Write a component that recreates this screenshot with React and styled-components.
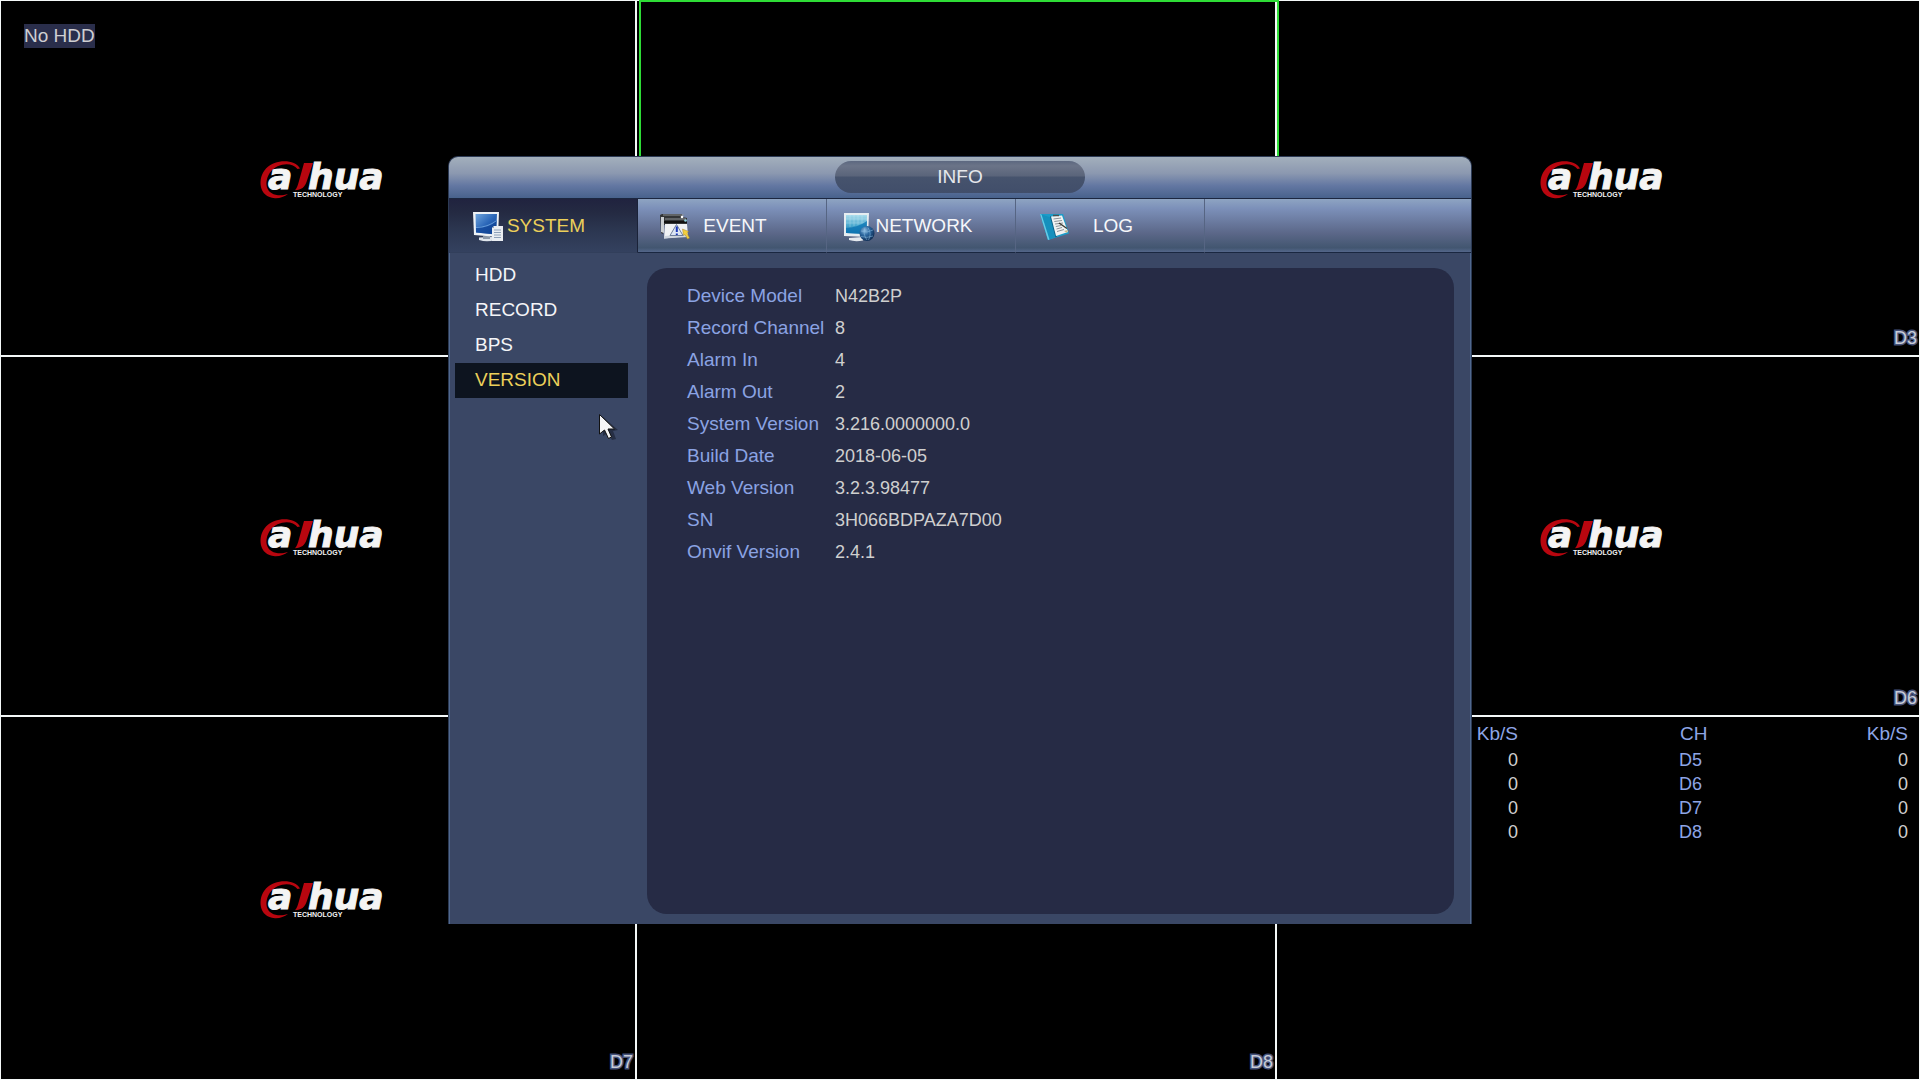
import React from "react";
import styled, { createGlobalStyle } from "styled-components";

const tabs = [
    { name: "SYSTEM", Icon: SystemIcon, active: true },
    { name: "EVENT", Icon: EventIcon },
    { name: "NETWORK", Icon: NetworkIcon },
    { name: "LOG", Icon: LogIcon }
];

const menu = ["HDD", "RECORD", "BPS", "VERSION"];

const details = [
    ["Device Model", "N42B2P"],
    ["Record Channel", "8"],
    ["Alarm In", "4"],
    ["Alarm Out", "2"],
    ["System Version", "3.216.0000000.0"],
    ["Build Date", "2018-06-05"],
    ["Web Version", "3.2.3.98477"],
    ["SN", "3H066BDPAZA7D00"],
    ["Onvif Version", "2.4.1"]
];

const rates = ["D5", "D6", "D7", "D8"];

function Logo () {
    return (
        <svg width="132" height="60" viewBox="-2 -10 132 60" role="img" aria-label="alhua technology">
            <path
                d="M46 9.5C41 .5 22-.5 12 9.5C3 19 4.500 38.500 21 39.200C26 39.400 30.500 37.500 34 35C30 36.200 27 36.600 24 36.200C11 34.800 10 22.500 16 13.500C23 4 38 2.500 43.500 10Z"
                fill="#b8060f"
            />
            <path d="M50 4H59L52.500 23C50.800 28 47.500 31 41 31.200C43 29 43.800 26.500 45 22Z" fill="#b8060f" />
            <LogoText x="14" y="30">{"a"}</LogoText>
            <LogoText x="54" y="30">{"hua"}</LogoText>
            <LogoCaption x="39" y="38">{"TECHNOLOGY"}</LogoCaption>
        </svg>
    );
}

function SystemIcon () {
    return (
        <svg width="32" height="32" viewBox="0 0 32 32">
            <defs>
                <linearGradient id="sysScreen" x1="0" y1="0" x2="1" y2="1">
                    <stop offset="0" stopColor="#6fa4dc" />
                    <stop offset="0.5" stopColor="#2a66b8" />
                    <stop offset="1" stopColor="#0d3c8c" />
                </linearGradient>
            </defs>
            <path d="M8 27.500L22 27L24 30Q16 32.500 8 30Z" fill="#dfe5ec" />
            <path d="M12 26H19V29H12Z" fill="#8c98a8" />
            <path d="M2 2H28L27 27L3 25Z" fill="#eef2f6" />
            <path d="M4.500 4H26L25 24.500L5 22.500Z" fill="url(#sysScreen)" />
            <path d="M5 17Q16 17 25.700 10L25 24.500L5 22.500Z" fill="#0f4497" opacity="0.7" />
            <path d="M5 17Q16 17 25.700 10V11Q16 18.500 5 18Z" fill="#5f97d8" />
            <path d="M23 16H32V31H21V18Z" fill="#e9edf2" />
            <path d="M23 20H30M23 22.500H30M23 25H30M23 27.500H30" stroke="#8da0b8" strokeWidth="1" />
            <path d="M23 16V18H21Z" fill="#9aa9bc" />
        </svg>
    );
}

function EventIcon () {
    return (
        <svg width="32" height="32" viewBox="0 0 32 32">
            <path d="M0 5L2 4H22V7L27 8V15H3V24L1 23Z" fill="#333537" />
            <path d="M1 7H4V23L1 22Z" fill="#c9cdd1" />
            <path d="M3 5H24M5 9H26" stroke="#8f9396" strokeWidth="1" />
            <path d="M4 12H27" stroke="#111" strokeWidth="2" />
            <circle cx="22" cy="7" r="1.3" fill="#fff" />
            <circle cx="25.500" cy="10.500" r="1.300" fill="#8fd0e0" />
            <path d="M5 14H27L28 26L4 28.500Z" fill="#f0f2f5" />
            <path d="M4 26L28 24V27L4 28.500Z" fill="#cfd6df" />
            <path d="M16.500 14.500L23 25.500H10Z" fill="#dce5f4" stroke="#6f7f9c" strokeWidth="1" />
            <path d="M16.800 16.500V22M16.800 23.500V25" stroke="#1936b8" strokeWidth="2" />
            <path d="M22.500 19L28.500 21.500L27 23L29.500 28L27.500 29L25 24.500L23.500 25.500Z" fill="#f3cf3e" stroke="#a3822a" strokeWidth="0.500" />
        </svg>
    );
}

function NetworkIcon () {
    return (
        <svg width="32" height="32" viewBox="0 0 32 32">
            <defs>
                <linearGradient id="netScreen" x1="0" y1="0" x2="0" y2="1">
                    <stop offset="0" stopColor="#a9dcec" />
                    <stop offset="0.550" stopColor="#4aa9cf" />
                    <stop offset="1" stopColor="#1272a8" />
                </linearGradient>
                <radialGradient id="netGlobe" cx="0.350" cy="0.300" r="0.800">
                    <stop offset="0" stopColor="#8fbde0" />
                    <stop offset="0.400" stopColor="#2c68a0" />
                    <stop offset="1" stopColor="#0a2348" />
                </radialGradient>
            </defs>
            <path d="M6 28L20 27V30.500Q12 32 6 30Z" fill="#e4e9ee" />
            <path d="M1 3H26L25 27L1 26Z" fill="#e6edf1" />
            <path d="M3 5H24L23.500 24L3 23Z" fill="url(#netScreen)" />
            <path d="M7 5V17M11 5V16M15 5V15M19 5V13M3 9H24M3 13H24" stroke="#d3f0f6" strokeWidth="0.600" opacity="0.500" />
            <path d="M3 18Q14 18 24 11L23.500 24L3 23Z" fill="#0c76b4" opacity="0.800" />
            <circle cx="24" cy="23.500" r="7.500" fill="url(#netGlobe)" />
            <path d="M18 21Q24 23.500 30 20M18 26.500Q24 28.500 30 26M22 17.500Q19.500 24 24 30M25 17.500Q29 24 25.500 30" stroke="#8fc0e4" strokeWidth="0.500" fill="none" />
        </svg>
    );
}

function LogIcon () {
    return (
        <svg width="32" height="32" viewBox="0 0 32 32">
            <path d="M2 4L25 4L31 23.500L10 30Z" fill="#1b9cc9" />
            <path d="M2 4L13 7.500L18 27L10 30Z" fill="#1590bd" />
            <path d="M2 4L3.500 4.500L11.500 29.500L10 30Z" fill="#69cbe6" />
            <path d="M12 6.500L13.500 6L19 26.500L17.500 27.500Z" fill="#0a5f86" />
            <path d="M13 6.500L24 5.500L30 22L18 26Z" fill="#f0f2f2" />
            <path d="M15.500 9L23 8M16.300 11.500L24 10.500M17 14L25 13M17.800 16.500L23 15.500M18.500 19L24 17.500M19 21.500L26 19.500" stroke="#8b9298" strokeWidth="1" />
            <path d="M15 5.500H21" stroke="#4b4f50" strokeWidth="1.500" />
            <path d="M21 13L29 18.500" stroke="#3b3b33" strokeWidth="1.500" />
            <path d="M26 21L30 20L29 23Z" fill="#c8b98a" />
        </svg>
    );
}

function Pointer () {
    return (
        <PointerSvg width="22" height="28" viewBox="0 0 22 28" aria-hidden="true">
            <path d="M4 3L19 16L14 17L17 25L13 26L9 19L4 22Z" fill="#1c2436" opacity="0.700" />
            <path d="M0.500 0.500V20L5.500 16L9.500 24.500L12.500 23L9 15H15.500Z" fill="#f4f4f6" stroke="#111" strokeWidth="1" />
        </PointerSvg>
    );
}

function RateTable () {
    return (
        <Rates>
            <thead>
                <tr>
                    <RateHead scope="col">{"Kb/S"}</RateHead>
                    <ChannelHead scope="col">{"CH"}</ChannelHead>
                    <RateHead scope="col">{"Kb/S"}</RateHead>
                </tr>
            </thead>
            <tbody>
                {rates.map(channel => (
                    <tr key={channel}>
                        <RateCell>{"0"}</RateCell>
                        <ChannelCell>{channel}</ChannelCell>
                        <RateCell>{"0"}</RateCell>
                    </tr>
                ))}
            </tbody>
        </Rates>
    );
}

function InfoDialog () {
    return (
        <Dialog role="dialog" aria-labelledby="info-title">
            <TitleBar>
                <Title id="info-title">{"INFO"}</Title>
            </TitleBar>
            <TabBar>
                {tabs.map(({ name, Icon, active }) => (
                    <Tab key={name} type="button" $active={active}>
                        <TabIcon><Icon /></TabIcon>
                        <span>{name}</span>
                    </Tab>
                ))}
                <TabFiller />
            </TabBar>
            <Body>
                <Menu>
                    {menu.map(item => (
                        <MenuItem key={item} type="button" $active={item === "VERSION"}>{item}</MenuItem>
                    ))}
                </Menu>
                <Panel>
                    <Details>
                        {details.map(([label, value]) => (
                            <React.Fragment key={label}>
                                <Label>{label}</Label>
                                <Value>{value}</Value>
                            </React.Fragment>
                        ))}
                    </Details>
                </Panel>
            </Body>
            <Pointer />
        </Dialog>
    );
}

function App () {
    return (
        <Screen>
            <GlobalStyle />
            <Wall>
                <Channel>
                    <Status>{"No HDD"}</Status>
                    <Logo />
                </Channel>
                <Channel><Selection /></Channel>
                <Channel>
                    <Logo />
                    <ChannelName>{"D3"}</ChannelName>
                </Channel>
                <Channel><Logo /></Channel>
                <Channel />
                <Channel>
                    <Logo />
                    <ChannelName>{"D6"}</ChannelName>
                </Channel>
                <Channel>
                    <Logo />
                    <ChannelName>{"D7"}</ChannelName>
                </Channel>
                <Channel><ChannelName>{"D8"}</ChannelName></Channel>
                <RateChannel><RateTable /></RateChannel>
            </Wall>
            <InfoDialog />
        </Screen>
    );
}

const GlobalStyle = createGlobalStyle`
    * {
        box-sizing: border-box;
    }
    body {
        margin: 0;
        background: #000;
        font-family: "Liberation Sans", Arial, sans-serif;
        font-size: 19px;
    }
    button {
        font: inherit;
        border: 0;
        padding: 0;
        cursor: default;
    }
`;

const Screen = styled.main`
    position: relative;
    display: grid;
    min-height: 100vh;
`;

const Wall = styled.div`
    display: grid;
    grid-template-columns: 634fr 638fr 642fr;
    grid-template-rows: 354fr 358fr 362fr;
    gap: 2px;
    padding: 1px;
    background: #f4f8f8;
`;

const Channel = styled.section`
    position: relative;
    display: flex;
    align-items: center;
    justify-content: center;
    padding-top: 2px;
    background: #000;
`;

const RateChannel = styled(Channel)`
    align-items: flex-start;
    justify-content: flex-end;
    padding-right: 11px;
`;

const Selection = styled.div`
    position: absolute;
    inset: -1px -4px 0 2px;
    border: 2px solid #2edc36;
    z-index: 1;
`;

const Status = styled.span`
    position: absolute;
    top: 23px;
    left: 23px;
    line-height: 24px;
    color: #cfcfd2;
    background: #2a2e4b;
`;

const ChannelName = styled.span`
    position: absolute;
    right: 2px;
    bottom: 0;
    font-size: 18px;
    line-height: 34px;
    color: #c8ccd6;
    -webkit-text-stroke: 3px #46527a;
    paint-order: stroke fill;
`;

const LogoText = styled.text`
    font: italic bold 36px "DejaVu Sans", sans-serif;
    fill: #f4f4f4;
    stroke: #f4f4f4;
    stroke-width: 1px;
`;

const LogoCaption = styled.text`
    font: bold 7px "Liberation Sans", sans-serif;
    fill: #f4f4f4;
`;

const Rates = styled.table`
    border-collapse: collapse;
    table-layout: fixed;
    line-height: 24px;

    th {
        height: 29px;
        font-weight: normal;
        color: #8ea5e6;
    }
`;

const RateHead = styled.th`
    width: 60px;
    padding: 0;
    text-align: right;
`;

const ChannelHead = styled.th`
    width: 330px;
    padding: 0 0 0 162px;
    text-align: left;
`;

const RateCell = styled.td`
    padding: 0;
    font-size: 18px;
    text-align: right;
    color: #cfcfcf;
`;

const ChannelCell = styled.td`
    padding: 0 0 0 161px;
    font-size: 18px;
    color: #8ea5e6;
`;

const Dialog = styled.div`
    position: absolute;
    top: 50%;
    left: 50%;
    transform: translate(-50%, -50%);
    z-index: 2;
    display: flex;
    flex-direction: column;
    width: 1024px;
    min-height: 768px;
    border: 1px solid #2c3a54;
    border-bottom: 0;
    border-radius: 10px 10px 0 0;
    background: #3a4765;
    overflow: hidden;
`;

const TitleBar = styled.header`
    display: flex;
    align-items: center;
    justify-content: center;
    height: 42px;
    padding-bottom: 2px;
    border-bottom: 1px solid #1c2740;
    background: linear-gradient(#a3afbc, #8b98b0 40%, #6377a2 70%, #48628c);
`;

const Title = styled.h1`
    width: 250px;
    margin: 0;
    border-radius: 16px;
    font-size: 19px;
    font-weight: normal;
    line-height: 32px;
    text-align: center;
    color: #e6e8ec;
    background: linear-gradient(#5c6880, #6b7488 15%, #5a647a 47%, #46536d 50%, #414e6a);
`;

const TabBar = styled.nav`
    display: flex;
    height: 54px;
`;

const Tab = styled.button`
    display: grid;
    grid-template-columns: 1fr max-content 1fr;
    align-items: center;
    width: 189px;
    padding-left: 6px;
    border-right: 1px solid ${props => props.$active ? "#1a2238" : "#566583"};
    border-bottom: 1px solid ${props => props.$active ? "#323f5b" : "#1a2740"};
    color: ${props => props.$active ? "#ecd05a" : "#f6f7fa"};
    background: ${props => props.$active
        ? "linear-gradient(#20233f, #242a42 25%, #2c3751 60%, #34415f)"
        : "linear-gradient(#8ea4c2, #7c90b9 18%, #5b6788 65%, #425670 92%, #54668a)"};
`;

const TabIcon = styled.span`
    display: flex;
    margin-left: min(16px, 100% - 32px);
`;

const TabFiller = styled.div`
    flex: 1;
    border-bottom: 1px solid #1a2740;
    background: linear-gradient(#8ea4c2, #7c90b9 18%, #5b6788 65%, #425670 92%, #54668a);
`;

const Body = styled.div`
    display: flex;
    flex: 1;
    border: solid #50688e;
    border-width: 0 1px;
`;

const Menu = styled.nav`
    display: flex;
    flex-direction: column;
    width: 197px;
    padding: 5px 19px 0 5px;
`;

const MenuItem = styled.button`
    height: 35px;
    padding: 0 0 2px 20px;
    text-align: left;
    color: ${props => props.$active ? "#ecd05a" : "#f4f5f8"};
    background: ${props => props.$active ? "#0d141f" : "none"};
`;

const Panel = styled.section`
    flex: 1;
    margin: 15px 16px 10px 0;
    padding: 12px 40px;
    border-radius: 20px;
    background: #262b45;
`;

const Details = styled.dl`
    display: grid;
    grid-template-columns: 148px 1fr;
    margin: 0;
    line-height: 32px;
`;

const Label = styled.dt`
    white-space: nowrap;
    color: #8ba3e3;
`;

const Value = styled.dd`
    margin: 0;
    font-size: 18px;
    color: #cfcfcf;
`;

const PointerSvg = styled.svg`
    position: absolute;
    top: 257px;
    left: 150px;
`;

export default App;
